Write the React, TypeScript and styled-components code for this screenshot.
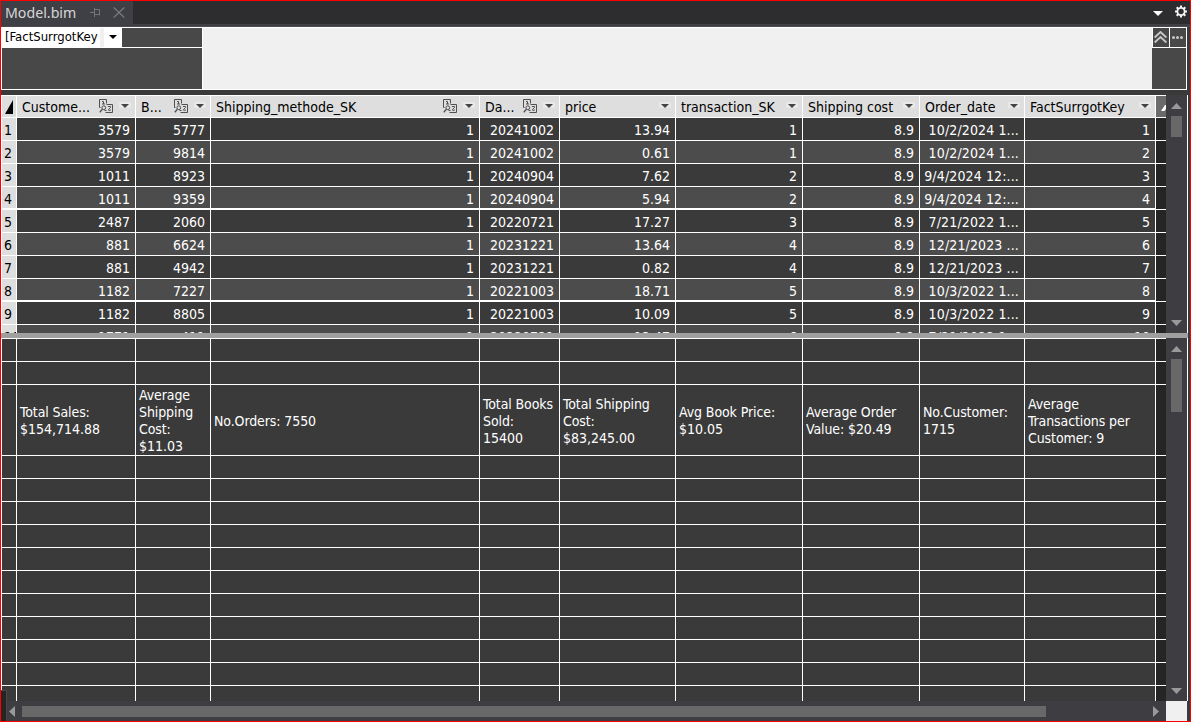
import React from "react";
import styled, { createGlobalStyle } from "styled-components";

const Global = createGlobalStyle`
  * { box-sizing: border-box; }
  body { margin: 0; background: #2d2d30; font-family: "DejaVu Sans Condensed", "Noto Sans", sans-serif; }
`;

const Frame = styled.div`
  position: relative;
  width: 1191px;
  height: 722px;
  border: 1px solid #ff0000;
  background: #3a3a3b;
  display: flex;
  flex-direction: column;
  overflow: hidden;
`;

const TabStrip = styled.div`
  height: 23px;
  flex: none;
  background: #2d2d30;
  display: flex;
  justify-content: space-between;
`;

const Tab = styled.div`
  width: 132px;
  background: #3f3f46;
  color: #d6d6d6;
  font-size: 14.2px;
  line-height: 22px;
  padding-left: 4px;
  display: flex;
  align-items: center;
`;

const TabTitle = styled.span`
  width: 85px;
  font-family: "Noto Sans", sans-serif;
  white-space: nowrap;
`;

const CloseIcon = styled.svg`
  margin-left: 12px;
`;

const TabTools = styled.div`
  display: flex;
  align-items: center;
  gap: 12px;
  padding-right: 2px;
  padding-bottom: 2px;
`;

const MenuArrow = styled.span`
  display: flex;
  padding-top: 3px;
`;

const TabEdge = styled.div`
  height: 3px;
  flex: none;
  background: #3f3f46;
  border-bottom: 1px solid #4a4a4f;
`;

const FormulaBar = styled.div`
  height: 63px;
  flex: none;
  width: 1186px;
  border: 1px solid #fff;
  display: flex;
`;

const NamePane = styled.div`
  width: 201px;
  background: #484848;
  border-right: 1px solid #fff;
`;

const NameRow = styled.div`
  height: 20px;
  display: flex;
  border-bottom: 1px solid #fff;
`;

const NameBox = styled.div`
  width: 120px;
  background: #fff;
  color: #000;
  font-size: 13px;
  line-height: 18px;
  padding-left: 3px;
  display: flex;
  white-space: nowrap;
`;

const NameText = styled.span`
  width: 95px;
`;

const NameGap = styled.span`
  width: 4px;
  background: #f0f0f0;
`;

const NameArrow = styled.span`
  flex: 1;
  display: flex;
  align-items: center;
  justify-content: center;
  padding-bottom: 2px;
`;

const FormulaInput = styled.div`
  flex: 1;
  background: #f0f0f0;
`;

const FormulaTools = styled.div`
  width: 34px;
  background: #484848;
`;

const ToolRow = styled.div`
  height: 20px;
  display: flex;
  border-bottom: 1px solid #fff;
`;

const ToolButton = styled.div`
  width: 17px;
  border-left: 1px solid #fff;
  display: flex;
  align-items: center;
  justify-content: center;
  padding-right: 2px;
  padding-bottom: 1px;
`;

const Spacer = styled.div`
  height: 5px;
  flex: none;
`;

const Pane = styled.div<{ $h: number }>`
  height: ${(p) => p.$h}px;
  flex: none;
  width: 1187px;
  display: flex;
  border-right: 1px solid #fff;
`;

const Grid = styled.div`
  width: 1165px;
  flex: none;
  overflow: hidden;
  border-left: 1px solid #fff;
`;

const Row = styled.div<{ $h?: number; $bg?: string; $thick?: boolean; $first?: boolean }>`
  display: grid;
  grid-template-columns: 15px 119px 75px 269px 80px 116px 127px 117px 105px 131px 10px;
  height: ${(p) => p.$h ?? 23}px;
  background: ${(p) => p.$bg ?? "#3a3a3a"};
  border-top: ${(p) => (p.$first ? "1px solid #fff" : "none")};
  border-bottom: 1px solid #fff;
  box-shadow: ${(p) => (p.$thick ? "inset 0 -1px 0 #fff" : "none")};
`;

const Cell = styled.div`
  border-right: 1px solid #fff;
  overflow: hidden;
`;

const Value = styled(Cell)<{ $date?: boolean }>`
  color: #fff;
  font-size: 14px;
  letter-spacing: ${(p) => (p.$date ? "0.13px" : "0")};
  line-height: 24px;
  padding-right: 5px;
  text-align: right;
  white-space: nowrap;
`;

const RowNumber = styled(Cell)<{ $thick?: boolean }>`
  background: #dedede;
  box-shadow: ${(p) => (p.$thick ? "inset 0 -1px 0 #fff" : "none")};
  color: #000;
  font-size: 14px;
  line-height: 24px;
  padding-left: 2px;
`;

const Edge = styled.div<{ $bg?: string }>`
  background: ${(p) => p.$bg ?? "#252525"};
  overflow: hidden;
  display: flex;
  align-items: center;
  justify-content: flex-end;
`;

const HeadCell = styled(Cell)`
  background: #dedede;
  color: #000;
  font-size: 14px;
  display: flex;
  align-items: center;
  padding-left: 5px;
  padding-right: 4px;
`;

const HeadText = styled.span`
  flex: 1;
  white-space: nowrap;
`;

const FilterArrow = styled.span`
  width: 12px;
  height: 8px;
  margin-left: 5px;
  margin-bottom: 2px;
  background: linear-gradient(#e8e8e8 6px, #dedede 6px);
  display: flex;
  align-items: center;
  justify-content: center;
`;

const CornerCell = styled(Cell)`
  background: #dedede;
  display: flex;
  align-items: center;
  justify-content: center;
`;

const Measure = styled(Cell)`
  color: #fff;
  font-size: 14px;
  line-height: 17px;
  padding-left: 3px;
  padding-top: 2px;
  display: flex;
  flex-direction: column;
  justify-content: center;
  white-space: pre;
`;

const MeasureLine = styled.span<{ $words: boolean }>`
  letter-spacing: ${(p) => (p.$words ? "-0.1px" : "0")};
`;

const Splitter = styled.div`
  height: 5px;
  flex: none;
  width: 1187px;
  background: #9f9f9f;
`;

const VScroll = styled.div<{ $top: number; $bottom: number }>`
  flex: 1;
  background: #3e3e42;
  display: flex;
  flex-direction: column;
  align-items: center;
  padding: ${(p) => p.$top}px 0 ${(p) => p.$bottom}px;
`;

const VThumb = styled.div<{ $h: number }>`
  width: 11px;
  height: ${(p) => p.$h}px;
  margin-top: 7px;
  margin-bottom: auto;
  background: #686868;
`;

const HScroll = styled.div`
  height: 20px;
  flex: none;
  width: 1187px;
  background: #3e3e42;
  display: flex;
  align-items: flex-start;
  padding-left: 8px;
`;

const HArrow = styled.span`
  display: flex;
  margin-top: 5px;
`;

const HThumb = styled.div`
  width: 1024px;
  height: 11px;
  margin: 5px 107px 0 7px;
  background: #686868;
`;

const ScrollCorner = styled.div`
  width: 21px;
  height: 20px;
  margin-left: 7px;
  background: #f0f0f0;
`;

const DockEdge = styled.div`
  position: absolute;
  left: -1px;
  bottom: 0;
  width: 7px;
  height: 31px;
  background: #252526;
  border-top: 1px solid #48484c;
  border-right: 1px solid #48484c;
`;

const Shape = styled.svg`
  flex: none;
  display: block;
`;

const Arrow = ({ dir, w = 11, h = 6, fill = "#999" }: { dir: "up" | "down" | "left" | "right"; w?: number; h?: number; fill?: string }) => {
  const pts = {
    up: `0,${h} ${w},${h} ${w / 2},0`,
    down: `0,0 ${w},0 ${w / 2},${h}`,
    left: `${w},0 ${w},${h} 0,${h / 2}`,
    right: `0,0 0,${h} ${w},${h / 2}`,
  }[dir];
  return (
    <Shape width={w} height={h} viewBox={`0 0 ${w} ${h}`}>
      <polygon points={pts} fill={fill} />
    </Shape>
  );
};

const RelationIcon = () => (
  <Shape width="15" height="15" viewBox="0 0 15 15" fill="none" stroke="#505050">
    <path d="M1.5 8.5H.5V.5H7.5V4.5" />
    <path d="M3 2.5H4.5V5M3 5H6" />
    <path d="M7.5 5.5H13.5V13.5H6.5" />
    <path d="M9 7.5H11.5V8.5L9.5 10.5V11.2H12" />
    <circle cx="4.8" cy="8.7" r="1.9" />
    <path d="M3.4 10.2L.8 13.2" strokeWidth="1.3" />
    <path d="M5.5 11.5H7.5" />
  </Shape>
);

const GearIcon = () => (
  <Shape width="13" height="13" viewBox="0 0 13 13" fill="none" stroke="#f5f5f5">
    <circle cx="6" cy="6.5" r="3.6" strokeWidth="1.8" />
    <path strokeWidth="2" d="M6 .5V2.6M6 10.4V12.5M0 6.5H2.1M9.9 6.5H12M1.7 2.2L3.2 3.7M8.8 9.3L10.3 10.8M10.3 2.2L8.8 3.7M3.2 9.3L1.7 10.8" />
  </Shape>
);

const headers: { text: string; icon?: boolean }[] = [
  { text: "Custome...", icon: true },
  { text: "B...", icon: true },
  { text: "Shipping_methode_SK", icon: true },
  { text: "Da...", icon: true },
  { text: "price" },
  { text: "transaction_SK" },
  { text: "Shipping cost" },
  { text: "Order_date" },
  { text: "FactSurrgotKey" },
];

const rows = [
  ["3579", "5777", "1", "20241002", "13.94", "1", "8.9", "10/2/2024 1...", "1"],
  ["3579", "9814", "1", "20241002", "0.61", "1", "8.9", "10/2/2024 1...", "2"],
  ["1011", "8923", "1", "20240904", "7.62", "2", "8.9", "9/4/2024 12:...", "3"],
  ["1011", "9359", "1", "20240904", "5.94", "2", "8.9", "9/4/2024 12:...", "4"],
  ["2487", "2060", "1", "20220721", "17.27", "3", "8.9", "7/21/2022 1...", "5"],
  ["881", "6624", "1", "20231221", "13.64", "4", "8.9", "12/21/2023 ...", "6"],
  ["881", "4942", "1", "20231221", "0.82", "4", "8.9", "12/21/2023 ...", "7"],
  ["1182", "7227", "1", "20221003", "18.71", "5", "8.9", "10/3/2022 1...", "8"],
  ["1182", "8805", "1", "20221003", "10.09", "5", "8.9", "10/3/2022 1...", "9"],
  ["1771", "411", "1", "20220721", "13.47", "6", "8.9", "7/21/2022 1...", "10"],
];

const measures = [
  ["Total Sales:", "$154,714.88"],
  ["Average", "Shipping", "Cost:", "$11.03"],
  ["No.Orders: 7550"],
  ["Total Books", "Sold:", "15400"],
  ["Total Shipping", "Cost:", "$83,245.00"],
  ["Avg Book Price:", "$10.05"],
  ["Average Order", "Value: $20.49"],
  ["No.Customer:", "1715"],
  ["Average", "Transactions per", "Customer: 9"],
];

const EmptyRow = ({ first }: { first?: boolean }) => (
  <Row $first={first} $h={first ? 24 : 23}>
    {Array.from({ length: 10 }, (_, i) => (
      <Cell key={i} />
    ))}
    <Edge />
  </Row>
);

export default function App() {
  return (
    <>
      <Global />
      <Frame>
        <TabStrip>
          <Tab>
            <TabTitle>Model.bim</TabTitle>
            <svg width="11" height="9" viewBox="0 0 11 9" fill="none" stroke="#74747a">
              <path d="M0 4.5H4M4.5 0V9M5 1.5H9.5V7.5M5 6.5H10" />
            </svg>
            <CloseIcon width="12" height="11" viewBox="0 0 12 11" fill="none" stroke="#77777d" strokeWidth="1.3">
              <path d="M.7 .5L11.3 10.5M11.3 .5L.7 10.5" />
            </CloseIcon>
          </Tab>
          <TabTools>
            <MenuArrow>
              <Arrow dir="down" w={10} h={5} fill="#fff" />
            </MenuArrow>
            <GearIcon />
          </TabTools>
        </TabStrip>
        <TabEdge />
        <FormulaBar>
          <NamePane>
            <NameRow>
              <NameBox>
                <NameText>[FactSurrgotKey</NameText>
                <NameGap />
                <NameArrow>
                  <Arrow dir="down" w={8} h={4} fill="#000" />
                </NameArrow>
              </NameBox>
            </NameRow>
          </NamePane>
          <FormulaInput />
          <FormulaTools>
            <ToolRow>
              <ToolButton>
                <Shape width="13" height="12" viewBox="0 0 13 12" fill="none" stroke="#c8c8c8" strokeWidth="1.9">
                  <path d="M.6 6.5L6.5 1L12.4 6.5M.6 11.5L6.5 6L12.4 11.5" />
                </Shape>
              </ToolButton>
              <ToolButton>
                <Shape width="11" height="3" viewBox="0 0 11 3" fill="#c8c8c8">
                  <circle cx="1.5" cy="1.5" r="1.5" />
                  <circle cx="5.5" cy="1.5" r="1.5" />
                  <circle cx="9.5" cy="1.5" r="1.5" />
                </Shape>
              </ToolButton>
            </ToolRow>
          </FormulaTools>
        </FormulaBar>
        <Spacer />
        <Pane $h={238}>
          <Grid>
            <Row $first>
              <CornerCell>
                <Shape width="8" height="14" viewBox="0 0 8 14">
                  <polygon points="8,0 8,14 0,14" fill="#000" />
                </Shape>
              </CornerCell>
              {headers.map((h) => (
                <HeadCell key={h.text}>
                  <HeadText>{h.text}</HeadText>
                  {h.icon && <RelationIcon />}
                  <FilterArrow>
                    <Arrow dir="down" w={8} h={4} fill="#444" />
                  </FilterArrow>
                </HeadCell>
              ))}
              <Edge $bg="#6a6a6a">
                <Shape width="5" height="8" viewBox="0 0 5 8">
                  <path d="M0 8L4 2H5V6L3.5 8Z" fill="#fff" />
                </Shape>
              </Edge>
            </Row>
            {rows.map((r, i) => {
              const thick = i === 3 || i === 7;
              return (
                <Row key={i} $bg={i % 2 ? "#4c4c4c" : "#3a3a3a"} $thick={thick}>
                  <RowNumber $thick={thick}>{i + 1}</RowNumber>
                  {r.map((v, j) => (
                    <Value key={j} $date={j === 7}>
                      {v}
                    </Value>
                  ))}
                  <Edge />
                </Row>
              );
            })}
          </Grid>
          <VScroll $top={8} $bottom={7}>
            <Arrow dir="up" />
            <VThumb $h={21} />
            <Arrow dir="down" />
          </VScroll>
        </Pane>
        <Splitter />
        <Pane $h={363}>
          <Grid>
            <EmptyRow first />
            <EmptyRow />
            <Row $h={71}>
              <Cell />
              {measures.map((lines) => (
                <Measure key={lines.join(" ")}>
                  {lines.map((line) => (
                    <MeasureLine key={line} $words={/^[A-Z]/.test(line)}>
                      {line}
                    </MeasureLine>
                  ))}
                </Measure>
              ))}
              <Edge />
            </Row>
            {Array.from({ length: 11 }, (_, i) => (
              <EmptyRow key={i} />
            ))}
          </Grid>
          <VScroll $top={8} $bottom={7}>
            <Arrow dir="up" />
            <VThumb $h={53} />
            <Arrow dir="down" />
          </VScroll>
        </Pane>
        <HScroll>
          <HArrow>
            <Arrow dir="left" w={6} h={11} />
          </HArrow>
          <HThumb />
          <HArrow>
            <Arrow dir="right" w={6} h={11} />
          </HArrow>
          <ScrollCorner />
        </HScroll>
        <DockEdge />
      </Frame>
    </>
  );
}
